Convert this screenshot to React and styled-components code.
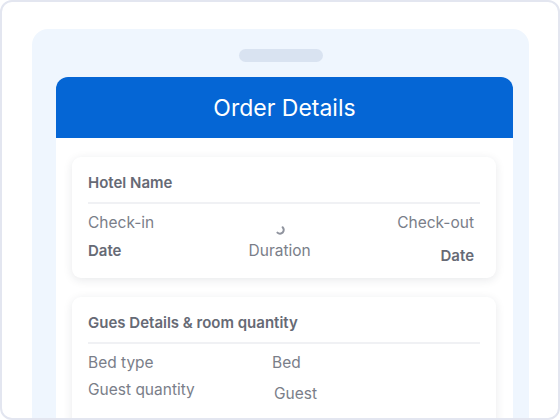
import React from "react";
import styled, { createGlobalStyle } from "styled-components";

const Global = createGlobalStyle`
  html, body { margin: 0; padding: 0; background: #ffffff; }
  body { font-family: "Inter", "Noto Sans", sans-serif; }
  * { box-sizing: border-box; }
`;

const Frame = styled.div`
  width: 560px;
  height: 420px;
  border: 2px solid #e3e6f0;
  border-radius: 12px;
  overflow: hidden;
  background: #ffffff;
  padding: 27px 29px 0 30px;
`;

const Phone = styled.div`
  background: #eff6fe;
  border-radius: 16px 16px 0 0;
  padding: 20px 16px 0 24px;
  height: 420px;
  display: flex;
  flex-direction: column;
  align-items: stretch;
`;

const Notch = styled.div`
  align-self: center;
  margin-left: -8px;
  width: 84px;
  height: 13px;
  border-radius: 7px;
  background: #d9e3f1;
  margin-bottom: 15px;
`;

const Screen = styled.div`
  background: #ffffff;
  border-radius: 12px 12px 0 0;
  flex: 1;
  overflow: hidden;
`;

const Header = styled.div`
  height: 61px;
  background: #0566d5;
  color: #ffffff;
  display: flex;
  align-items: center;
  justify-content: center;
  font-size: 23px;
  font-weight: 400;
  padding-top: 1px;
`;

const Body = styled.div`
  padding: 19px 17px 0 16px;
  display: flex;
  flex-direction: column;
  gap: 19px;
`;

const Card = styled.div`
  background: #ffffff;
  border-radius: 9px;
  box-shadow: 0 2px 10px rgba(30, 40, 60, 0.1);
  padding: 16px 16px ${(p) => p.$bottom || 12}px 16px;
`;

const Title = styled.div`
  font-size: 15px;
  line-height: 20px;
  font-weight: 600;
  color: #666a75;
  padding-bottom: 9px;
  border-bottom: 2px solid #f0f1f4;
  margin-bottom: 9px;
`;

const TripRow = styled.div`
  display: flex;
  justify-content: space-between;
  align-items: stretch;
  padding-right: 6px;
`;

const Col = styled.div`
  display: flex;
  flex-direction: column;
  align-items: ${(p) => p.$align || "flex-start"};
  gap: 8px;
`;

const Label = styled.div`
  font-size: 15.5px;
  line-height: 20px;
  color: #7a7e89;
  margin-top: ${(p) => p.$shift || 0}px;
  padding-left: ${(p) => p.$indent || 0}px;
`;

const Value = styled.div`
  font-size: 15px;
  line-height: 20px;
  font-weight: 600;
  color: #666a75;
  margin-top: ${(p) => p.$shift || 0}px;
`;

const Middle = styled.div`
  display: flex;
  flex-direction: column;
  align-items: center;
  justify-content: flex-start;
  padding-left: 8px;
`;

const Spinner = styled.svg`
  display: block;
  width: 10px;
  height: 10px;
  margin-top: 12px;
  margin-bottom: 6px;
`;

const InfoGrid = styled.div`
  display: grid;
  grid-template-columns: 184px 1fr;
  row-gap: 7px;
`;

export default function App() {
  return (
    <>
      <Global />
      <Frame>
        <Phone>
          <Notch />
          <Screen>
            <Header>Order Details</Header>
            <Body>
              <Card>
                <Title>Hotel Name</Title>
                <TripRow>
                  <Col>
                    <Label>Check-in</Label>
                    <Value>Date</Value>
                  </Col>
                  <Middle>
                    <Spinner viewBox="0 0 10 10">
                      <path
                        d="M7.6 2.2 A3.6 3.6 0 0 1 2.4 7.6"
                        fill="none"
                        stroke="#8f939e"
                        strokeWidth="2"
                        strokeLinecap="round"
                      />
                    </Spinner>
                    <Label>Duration</Label>
                  </Middle>
                  <Col $align="flex-end">
                    <Label>Check-out</Label>
                    <Value $shift={5}>Date</Value>
                  </Col>
                </TripRow>
              </Card>
              <Card $bottom={40}>
                <Title>Gues Details &amp; room quantity</Title>
                <InfoGrid>
                  <Label>Bed type</Label>
                  <Label>Bed</Label>
                  <Label>Guest quantity</Label>
                  <Label $shift={4} $indent={2}>Guest</Label>
                </InfoGrid>
              </Card>
            </Body>
          </Screen>
        </Phone>
      </Frame>
    </>
  );
}
